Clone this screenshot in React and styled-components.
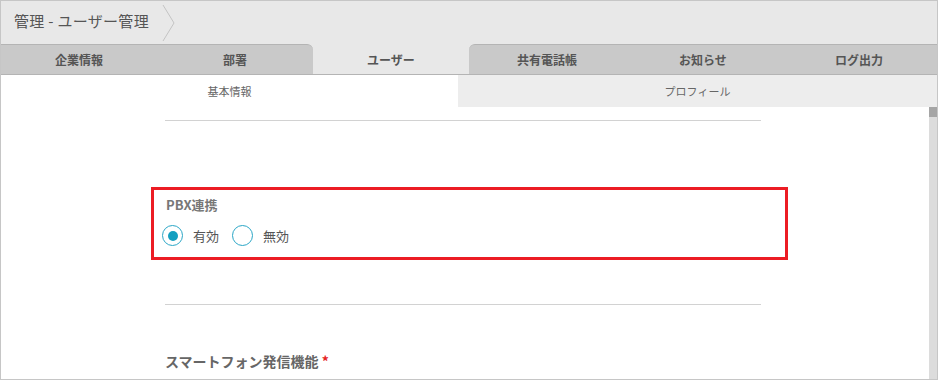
import styled, { createGlobalStyle } from "styled-components";

const GlobalStyle = createGlobalStyle`
  body {
    margin: 0;
    font-family: "Noto Sans CJK JP", "Noto Sans", sans-serif;
    background: #fff;
  }
`;

const tabs = ["企業情報", "部署", "ユーザー", "共有電話帳", "お知らせ", "ログ出力"];
const ACTIVE = 2;

function App() {
  return (
    <>
      <GlobalStyle />
      <Frame>
        <Header>
          <Crumb>管理 - ユーザー管理</Crumb>
          <svg width="16" height="38" viewBox="0 0 16 38">
            <path d="M2 1 L13 19 L2 37" fill="none" stroke="#c4c4c4" strokeWidth="1" />
          </svg>
        </Header>

        <TabBar>
          {tabs.map((t, i) => (
            <Tab
              key={t}
              $active={i === ACTIVE}
              $leftRound={i === ACTIVE + 1}
              $rightRound={i === ACTIVE - 1}
            >
              {t}
            </Tab>
          ))}
        </TabBar>

        <SubTabs>
          <SubTab $active>基本情報</SubTab>
          <SubTab>プロフィール</SubTab>
        </SubTabs>

        <Body>
          <Scroll>
            <Column>
              <Rule />
              <Highlight>
                <FieldLabel>PBX連携</FieldLabel>
                <RadioRow>
                  <Option>
                    <Radio $checked />
                    <span>有効</span>
                  </Option>
                  <Option>
                    <Radio />
                    <span>無効</span>
                  </Option>
                </RadioRow>
              </Highlight>
              <Rule $top={44} />
              <BigLabel>
                スマートフォン発信機能 <Req>*</Req>
              </BigLabel>
            </Column>
          </Scroll>
          <ScrollBar>
            <Thumb />
          </ScrollBar>
        </Body>
      </Frame>
    </>
  );
}

const Frame = styled.div`
  width: 938px;
  height: 380px;
  box-sizing: border-box;
  border: 1px solid #c6c6c6;
  overflow: hidden;
  display: flex;
  flex-direction: column;
  background: #fff;
`;

const Header = styled.div`
  height: 43px;
  background: #e8e8e8;
  display: flex;
  align-items: center;
  padding-left: 13px;
  gap: 12px;
  flex-shrink: 0;
`;

const Crumb = styled.span`
  font-size: 15px;
  color: #555;
  line-height: 20px;
  margin-top: -4px;
  letter-spacing: 0.3px;
`;

const TabBar = styled.div`
  display: grid;
  grid-template-columns: repeat(6, 1fr);
  background: #e8e8e8;
  height: 31px;
  box-sizing: border-box;
  border-bottom: 1px solid #b4b4b4;
  flex-shrink: 0;
`;

const Tab = styled.div`
  display: flex;
  align-items: center;
  justify-content: center;
  font-size: 12px;
  font-weight: bold;
  color: #555;
  background: ${(p) => (p.$active ? "#e8e8e8" : "#c9c9c9")};
  border-top: 1px solid ${(p) => (p.$active ? "transparent" : "#b4b4b4")};
  border-top-left-radius: ${(p) => (p.$leftRound ? "6px" : "0")};
  border-top-right-radius: ${(p) => (p.$rightRound ? "6px" : "0")};
`;

const SubTabs = styled.div`
  display: grid;
  grid-template-columns: 457px 1fr;
  height: 32px;
  flex-shrink: 0;
`;

const SubTab = styled.div`
  display: flex;
  align-items: center;
  justify-content: center;
  font-size: 11px;
  color: #666;
  background: ${(p) => (p.$active ? "#fff" : "#ededed")};
`;

const Body = styled.div`
  flex: 1;
  display: flex;
  min-height: 0;
`;

const Scroll = styled.div`
  flex: 1;
  overflow: hidden;
`;

const Column = styled.div`
  width: 596px;
  margin-left: 164px;
  padding-top: 13px;
`;

const Rule = styled.div`
  height: 1px;
  background: #d2d2d2;
  margin-top: ${(p) => (p.$top ? `${p.$top}px` : "0")};
`;

const Highlight = styled.div`
  margin: 66px -27px 0 -14px;
  border: 3px solid #ec1c24;
  height: 73px;
  box-sizing: border-box;
  padding: 6px 8px 0;
`;

const FieldLabel = styled.div`
  font-size: 13px;
  line-height: 18px;
  font-weight: bold;
  color: #777;
  padding-left: 4px;
`;

const RadioRow = styled.div`
  display: flex;
  align-items: center;
  gap: 13px;
  margin-top: 11px;
`;

const Option = styled.label`
  display: flex;
  align-items: center;
  gap: 10px;
  font-size: 13px;
  color: #555;
`;

const Radio = styled.span`
  width: 21px;
  height: 21px;
  box-sizing: border-box;
  border-radius: 50%;
  border: 1.5px solid #2aa6c6;
  display: flex;
  align-items: center;
  justify-content: center;

  &::after {
    content: "";
    width: 10px;
    height: 10px;
    border-radius: 50%;
    background: ${(p) => (p.$checked ? "#149fc0" : "transparent")};
  }
`;

const BigLabel = styled.div`
  margin-top: 46px;
  font-size: 14px;
  line-height: 20px;
  font-weight: bold;
  color: #666;
`;

const Req = styled.span`
  color: #e52222;
`;

const ScrollBar = styled.div`
  width: 8px;
  background: #dcdcdc;
  flex-shrink: 0;
`;

const Thumb = styled.div`
  height: 10px;
  background: #a5a5a5;
`;

export default App;
